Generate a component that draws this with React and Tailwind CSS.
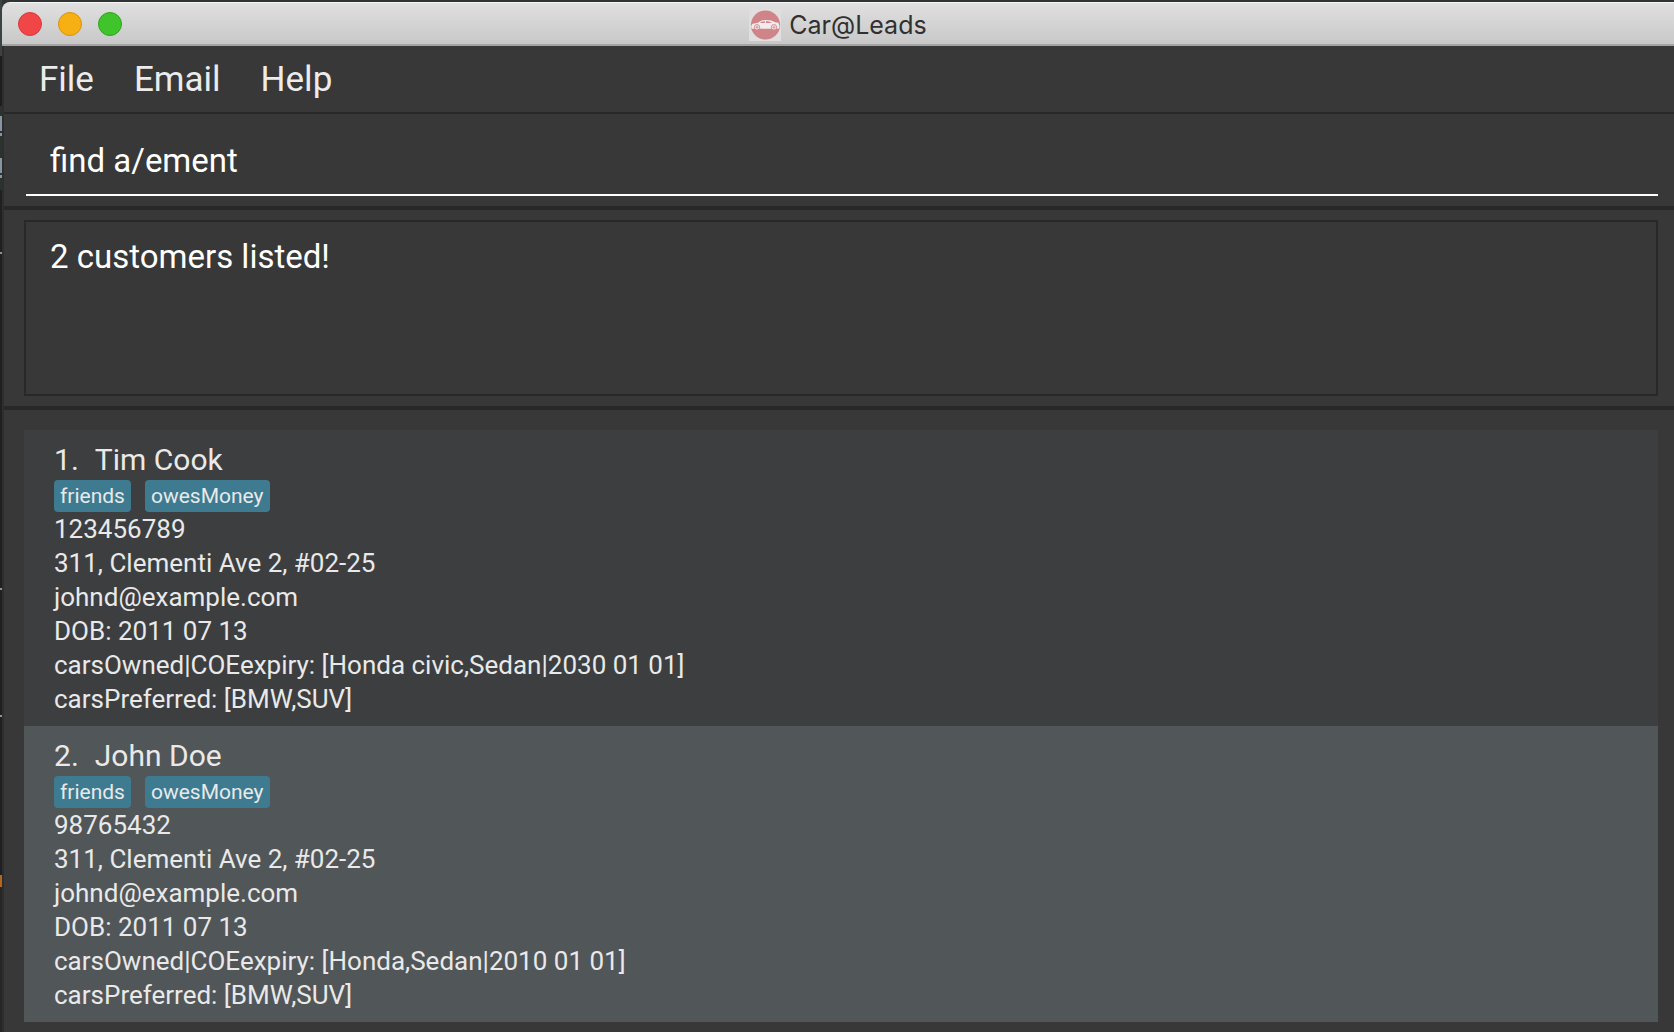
const customers = [
  {
    id: 1,
    name: "Tim Cook",
    phone: "123456789",
    address: "311, Clementi Ave 2, #02-25",
    email: "johnd@example.com",
    dob: "2011 07 13",
    owned: "[Honda civic,Sedan|2030 01 01]",
    preferred: "[BMW,SUV]",
    row: "bg-[#3c3e3f]",
  },
  {
    id: 2,
    name: "John Doe",
    phone: "98765432",
    address: "311, Clementi Ave 2, #02-25",
    email: "johnd@example.com",
    dob: "2011 07 13",
    owned: "[Honda,Sedan|2010 01 01]",
    preferred: "[BMW,SUV]",
    row: "bg-[#515658]",
  },
];

const tags = ["friends", "owesMoney"];

// Slivers of the editor window that sits behind this one.
const backdrop = [
  "h-14 bg-[#3c4243]",
  "h-[50px] bg-[#1e1e1e]",
  "h-2.5 bg-[#2b332c]",
  "h-[15px] bg-[#8595a3]",
  "h-0.5 bg-[#2b332c]",
  "h-[3px] bg-[#8595a3]",
  "h-[22px] bg-[#2b332c]",
  "h-[15px] bg-[#8595a3]",
  "h-0.5 bg-[#2b332c]",
  "h-[3px] bg-[#8595a3]",
  "h-3 bg-[#2b332c]",
  "h-[62px] bg-[#202020]",
  "h-0.5 bg-[#8595a3]",
  "h-[334px] bg-[#202020]",
  "h-0.5 bg-[#8595a3]",
  "h-[125px] bg-[#202020]",
  "h-0.5 bg-[#8595a3]",
  "h-[158px] bg-[#202020]",
  "h-3 bg-[#b5651d]",
  "grow bg-[#262626]",
];

function CarLogo() {
  return (
    <svg viewBox="0 0 32 32" className="size-8" aria-hidden="true">
      <rect width="32" height="32" fill="#e1dedf" />
      <circle cx="16.5" cy="16" r="14.6" fill="#cf8489" />
      <path
        d="M2.200 18.500c0-1.800.7-3.300 1.600-3.700l5.200-1c2.200-1.900 4.500-2.800 8-2.800 4 0 6.600.8 9 2.300l3.300.4c.8 1.200 1.200 3.300 1.200 4.800l-1 1.300H3z"
        fill="#f3ebec"
      />
      <path d="M11 14c1.400-1.200 2.900-1.700 4.700-1.800V14zM17 12.200c2.300 0 4.200.5 6 1.800h-6z" fill="#cf8489" />
      <circle cx="8" cy="18.300" r="2.700" fill="#f3ebec" stroke="#cf8489" strokeWidth="0.900" />
      <circle cx="25" cy="18.300" r="2.700" fill="#f3ebec" stroke="#cf8489" strokeWidth="0.900" />
      <path d="M8 16.800v3M6.500 18.300h3M25 16.800v3M23.500 18.300h3" stroke="#cf8489" strokeWidth="0.800" />
    </svg>
  );
}

function Customer({ c }) {
  return (
    <li className={`px-[30px] py-2.5 text-[26px] leading-[34px] text-[#e9e9e9] ${c.row}`}>
      <h2 className="flex gap-4 text-[30px] leading-10">
        <span>{c.id}.</span>
        <span>{c.name}</span>
      </h2>
      <div className="flex gap-3.5">
        {tags.map((t) => (
          <span key={t} className="rounded bg-[#3e7b91] px-1.5 text-[21px] leading-8">
            {t}
          </span>
        ))}
      </div>
      <p>{c.phone}</p>
      <p>{c.address}</p>
      <p>{c.email}</p>
      <p>DOB: {c.dob}</p>
      <p>carsOwned|COEexpiry: {c.owned}</p>
      <p>carsPreferred: {c.preferred}</p>
    </li>
  );
}

export default function App() {
  return (
    <div className="flex min-h-screen bg-[#303434] font-['Roboto',sans-serif]">
      <div className="flex w-0.5 shrink-0 flex-col" aria-hidden="true">
        {backdrop.map((cls, i) => (
          <span key={i} className={`block ${cls}`} />
        ))}
      </div>
      <div className="mt-0.5 flex grow flex-col overflow-hidden rounded-tl-lg bg-[#383838]">
        <header className="grid h-11 grid-cols-[1fr_auto_1fr] items-center border-t border-b-2 border-t-[#f5f5f5] border-b-[#a3a3a3] bg-linear-to-b from-[#e0e0e0] to-[#c8c8c8] px-4">
          <div className="flex gap-4">
            <button aria-label="Close" className="size-6 rounded-full border border-[#d93a3d] bg-[#f14648]" />
            <button aria-label="Minimize" className="size-6 rounded-full border border-[#d9930f] bg-[#f6b014]" />
            <button aria-label="Zoom" className="size-6 rounded-full border border-[#33a321] bg-[#3fc42b]" />
          </div>
          <div className="flex items-center gap-2 pt-0.5 font-['Inter',sans-serif] text-[25px] leading-8 text-[#303030]">
            <CarLogo />
            <h1>Car@Leads</h1>
          </div>
        </header>
        <div className="flex grow flex-col border-l-2 border-[#2e2e2e]">
          <nav className="flex h-[68px] items-center gap-10 border-b-2 border-[#282828] px-[35px] pt-0.5 text-[35px] text-[#ececec]">
            <button>File</button>
            <button>Email</button>
            <button>Help</button>
          </nav>
          <div className="border-b-4 border-[#282828] pt-4 pr-4 pb-2.5 pl-[22px]">
            <input
              aria-label="Command"
              defaultValue="find a/ement"
              className="block h-[66px] w-full border-b-2 border-white bg-transparent px-6 pb-1 text-[33px] text-white outline-none"
            />
          </div>
          <div className="border-b-4 border-[#282828] py-2.5 pr-4 pl-5">
            <output className="block h-44 border-2 border-[#282828] px-6 py-3 text-[33px] leading-[46px] text-white">
              2 customers listed!
            </output>
          </div>
          <ul className="pt-5 pr-4 pb-2.5 pl-5">
            {customers.map((c) => (
              <Customer key={c.id} c={c} />
            ))}
          </ul>
        </div>
      </div>
    </div>
  );
}
